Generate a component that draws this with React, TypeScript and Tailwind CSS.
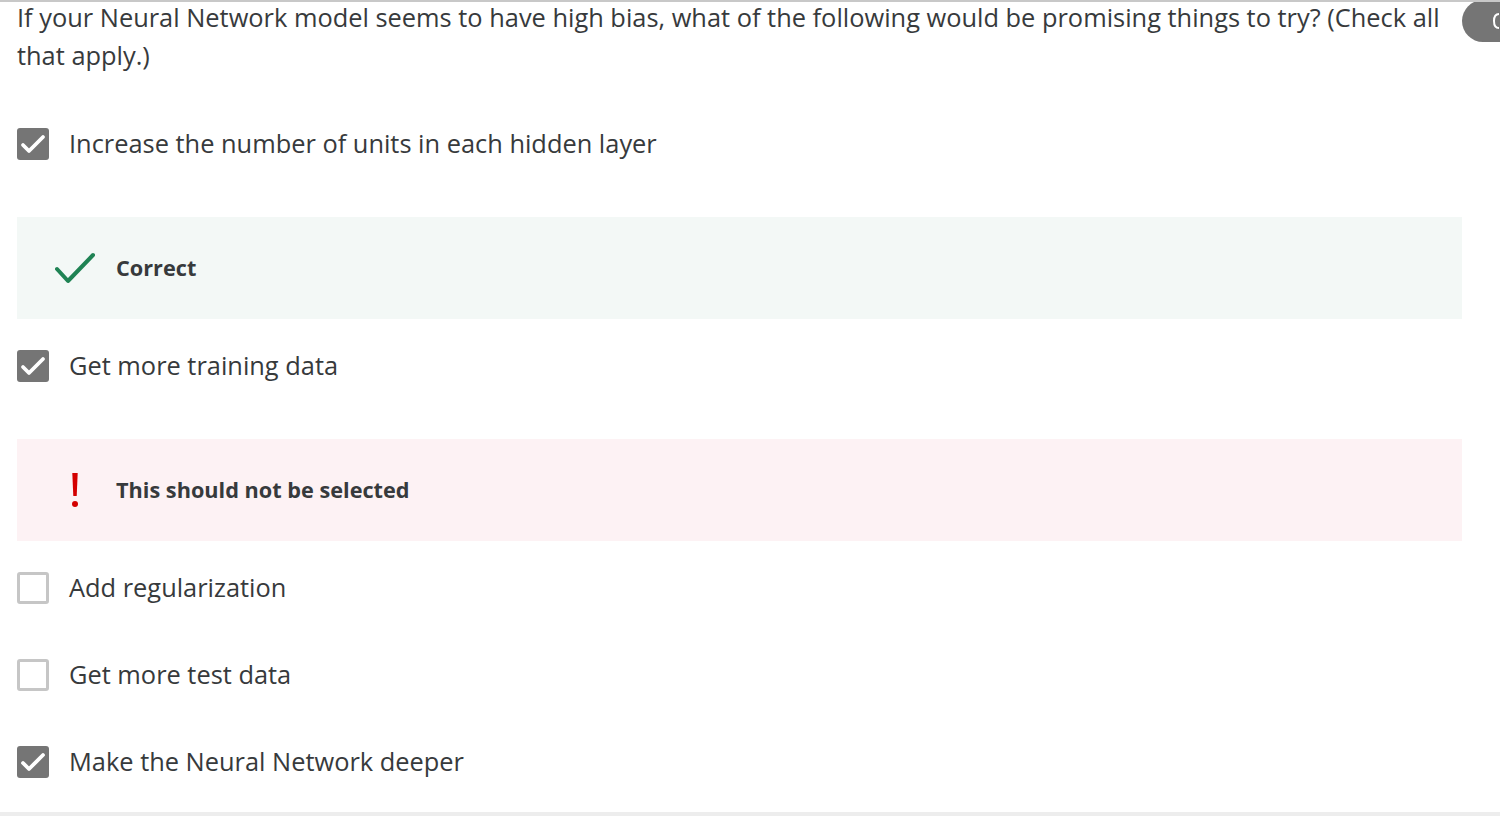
import React from "react";

type Feedback = { kind: "correct" | "wrong"; text: string };

interface OptionProps {
  label: string;
  checked: boolean;
  feedback?: Feedback;
  className?: string;
}

function CheckBox({ checked }: { checked: boolean }) {
  if (checked) {
    return (
      <span className="flex h-8 w-8 shrink-0 items-center justify-center rounded-[3px] bg-[#757575]">
        <svg width="26" height="20" viewBox="0 0 26 20" fill="none">
          <path d="M3 11l6 6L23 3" stroke="#fff" strokeWidth="3.8" strokeLinecap="round" strokeLinejoin="round" />
        </svg>
      </span>
    );
  }
  return <span className="h-8 w-8 shrink-0 rounded-[3px] border-[3px] border-[#c6c6c6] bg-white" />;
}

function FeedbackBox({ feedback }: { feedback: Feedback }) {
  const correct = feedback.kind === "correct";
  return (
    <div className={`flex h-[102px] items-center ${correct ? "bg-[#f3f8f6]" : "bg-[#fdf2f4]"}`}>
      <div className="flex w-[99px] justify-end">
        {correct ? (
          <svg width="42" height="32" viewBox="0 0 42 32" fill="none" className="mr-[19px]">
            <path d="M2 17l11 12L38 3" stroke="#1f8354" strokeWidth="4" strokeLinecap="round" strokeLinejoin="round" />
          </svg>
        ) : (
          <svg width="10" height="36" viewBox="0 0 10 36" className="mr-[36px]">
            <path d="M2.3 1h5.4l-1 23H3.3z" fill="#d40000" />
            <circle cx="5" cy="32" r="3" fill="#d40000" />
          </svg>
        )}
      </div>
      <span className="text-[21.7px] font-bold text-[#373a3c]">{feedback.text}</span>
    </div>
  );
}

function Option({ label, checked, feedback, className }: OptionProps) {
  return (
    <div className={className}>
      <label className="flex h-10 items-center gap-[20px]">
        <CheckBox checked={checked} />
        <span className="text-[25.4px] leading-none text-[#373a3c]">{label}</span>
      </label>
      {feedback && (
        <div className="mt-[53px]">
          <FeedbackBox feedback={feedback} />
        </div>
      )}
    </div>
  );
}

export default function App() {
  return (
    <div
      className="relative h-[816px] w-[1500px] overflow-hidden border-t-2 border-[#c8c8c8] bg-white"
      style={{ fontFamily: '"Open Sans", "Noto Sans", sans-serif' }}
    >
      {/* cut-off control at top right */}
      <div className="absolute right-0 top-[-2px] flex h-[42px] w-[38px] items-center justify-end overflow-hidden rounded-l-full bg-[#757575]">
        <svg width="8" height="20" viewBox="0 0 8 20" fill="none">
          <path d="M7 3C3.5 3 2 6 2 10s1.5 7 5 7" stroke="#fff" strokeWidth="2" />
        </svg>
      </div>

      <div className="w-[1462px] pl-[17px]">
        <p className="-mt-[4px] w-[1440px] text-[25.4px] leading-[38px] text-[#373a3c]">
          If your Neural Network model seems to have high bias, what of the following would be promising things to try? (Check all that apply.)
        </p>

        <Option
          className="mt-[50px]"
          label="Increase the number of units in each hidden layer"
          checked
          feedback={{ kind: "correct", text: "Correct" }}
        />
        <Option
          className="mt-[27px]"
          label="Get more training data"
          checked
          feedback={{ kind: "wrong", text: "This should not be selected" }}
        />
        <Option className="mt-[27px]" label="Add regularization" checked={false} />
        <Option className="mt-[47px]" label="Get more test data" checked={false} />
        <Option className="mt-[47px]" label="Make the Neural Network deeper" checked />
      </div>

      <div className="absolute bottom-0 left-0 h-[4px] w-full bg-[#ededed]" />
    </div>
  );
}
